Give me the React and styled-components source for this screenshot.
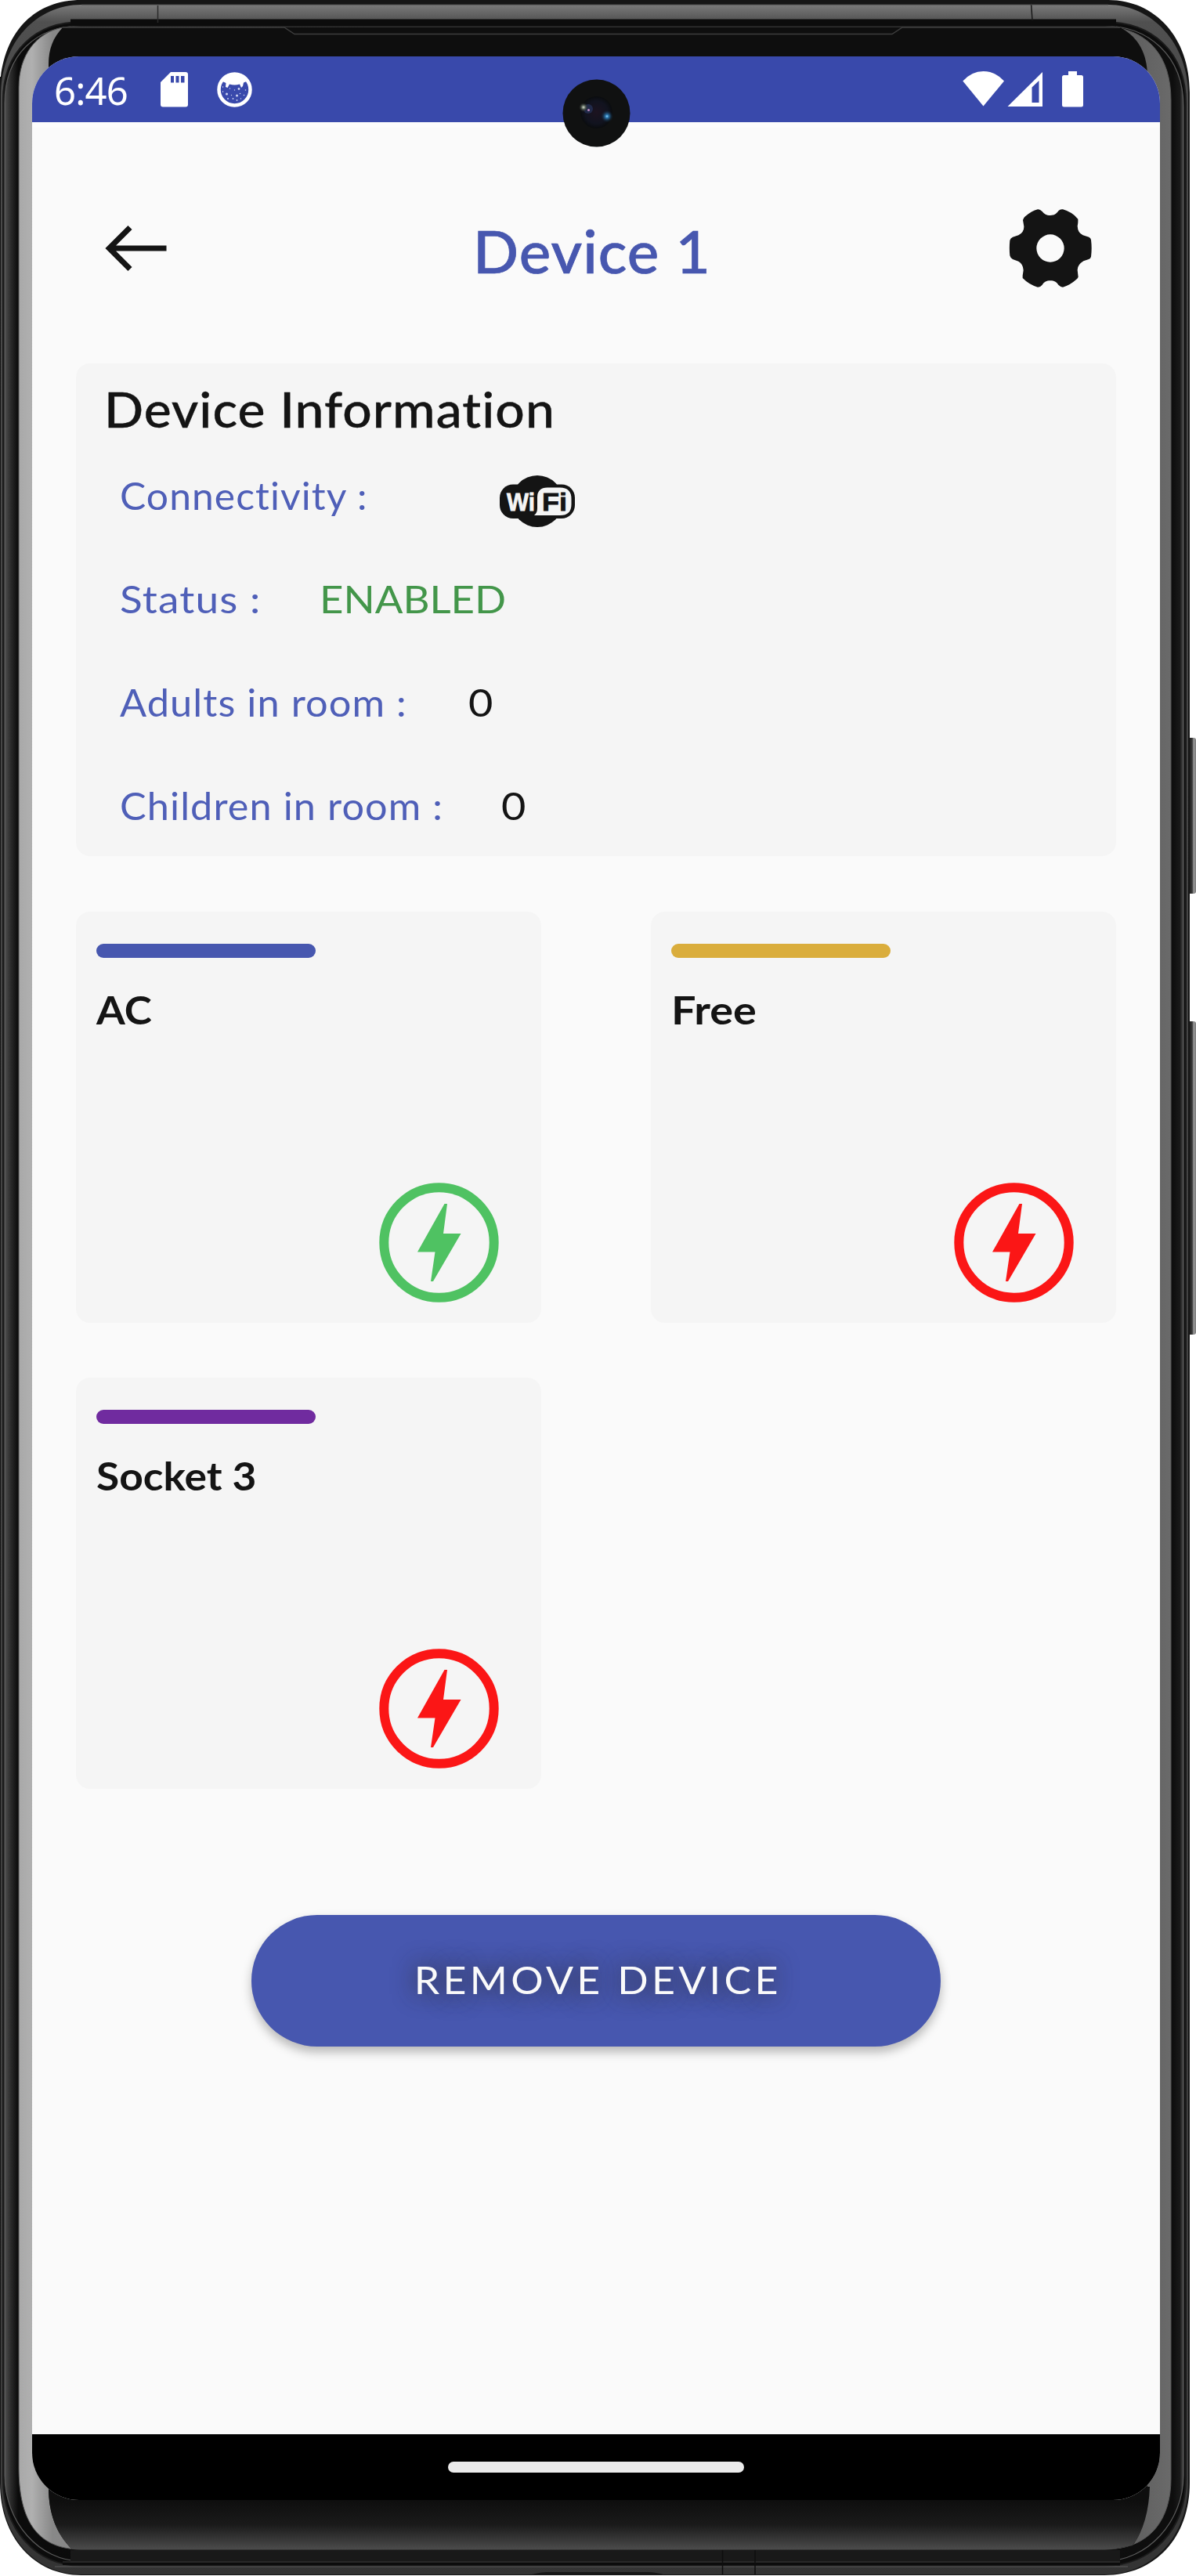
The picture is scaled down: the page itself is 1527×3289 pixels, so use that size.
import React from "react";
import styled, { createGlobalStyle } from "styled-components";

const GlobalStyle = createGlobalStyle`
  body { margin: 0; background: #fff; }
  * { box-sizing: border-box; }
`;

const Stage = styled.div`
  position: relative;
  width: 1527px;
  height: 3289px;
  padding: 72px 46px 97px 41px;
  font-family: Lato, "Open Sans", sans-serif;
  color: #141414;
  overflow: hidden;
`;

const FrameArt = styled.svg`
  position: absolute;
  inset: 0;
  width: 1527px;
  height: 3289px;
`;

const SideKey = styled.div`
  position: absolute;
  left: 1519px;
  top: ${(p) => p.$top}px;
  width: 8px;
  height: ${(p) => p.$height}px;
  border-radius: 0 3px 3px 0;
  background: linear-gradient(90deg, #222, #3a3a3a 40%, #999 62%, #7c7c7c);
`;

const Camera = styled.svg`
  position: absolute;
  left: 718px;
  top: 101px;
  width: 87px;
  height: 87px;
`;

const Screen = styled.div`
  position: relative;
  display: flex;
  flex-direction: column;
  width: 1440px;
  height: 3120px;
  border-radius: 60px;
  overflow: hidden;
  background: #fafafa;
`;

const StatusBar = styled.div`
  display: flex;
  justify-content: space-between;
  height: 84px;
  padding: 0 97px 0 28px;
  background: #3949ab;
  color: #fff;
`;

const Clock = styled.span`
  font: 400 49px/84px "Noto Sans", "Open Sans", sans-serif;
  width: 135px;
  height: 84px;
  padding-top: 1px;
  letter-spacing: -0.8px;
`;

const Side = styled.div`
  display: flex;
`;

const Content = styled.main`
  display: flex;
  flex-direction: column;
  align-items: center;
  flex: 1;
  padding: 0 56px;
  border-top: 7px solid #fcfcfc;
`;

const Header = styled.header`
  display: flex;
  justify-content: space-between;
  align-items: center;
  width: 100%;
  height: 301px;
  padding: 6px 31px 0 37px;
`;

const Title = styled.h1`
  margin: 0;
  padding: 7px 0 0 9px;
  font-size: 75px;
  line-height: 90px;
  font-weight: 500;
  letter-spacing: 1px;
  transform: scaleX(${(p) => p.$stretch});
  -webkit-text-stroke: 0.7px #4757af;
  color: #4757af;
`;

const InfoCard = styled.section`
  width: 1328px;
  height: 629px;
  padding: 21px 36px 0;
  border-radius: 18px;
  background: #f5f5f5;
`;

const InfoTitle = styled.h2`
  margin: 0 0 19px;
  font-size: 62px;
  line-height: 74px;
  font-weight: 500;
  letter-spacing: 1px;
  transform: scaleX(${(p) => p.$stretch});
  transform-origin: left;
  -webkit-text-stroke: 0.4px #141414;
`;

const InfoRow = styled.div`
  display: flex;
  align-items: center;
  height: 132px;
  padding: 0 0 24px 20px;
  font-size: 47.5px;
  line-height: 57px;
`;

const Label = styled.span`
  width: ${(p) => p.$width}px;
  white-space: nowrap;
  color: #4f5fb8;
`;

const Stretched = styled.span`
  display: inline-block;
  letter-spacing: 1px;
  transform: scaleX(${(p) => p.$stretch});
  transform-origin: left;
`;

const Value = styled.span`
  display: inline-block;
  color: ${(p) => p.$color || "#141414"};
  transform: scaleX(${(p) => p.$stretch});
  transform-origin: left;
`;

const WifiMark = styled.svg`
  width: 98px;
  height: 68px;
  margin-top: 15px;
`;

const SocketGrid = styled.section`
  display: grid;
  grid-template-columns: 594px 594px;
  gap: 70px 140px;
  margin-top: 71px;
`;

const SocketCard = styled.article`
  display: flex;
  flex-direction: column;
  height: 525px;
  padding: 41px 54px 26px 26px;
  border-radius: 18px;
  background: #f5f5f5;
`;

const Accent = styled.div`
  width: 280px;
  height: 18px;
  border-radius: 9px;
  background: ${(p) => p.$color};
`;

const SocketName = styled.h3`
  margin: 36px 0 auto;
  font-size: 50px;
  line-height: 60px;
  font-weight: 700;
  transform: scaleX(${(p) => p.$stretch});
  transform-origin: left;
`;

const BoltIcon = styled.svg`
  align-self: flex-end;
  width: 153px;
  height: 153px;
`;

const RemoveButton = styled.button`
  width: 880px;
  height: 168px;
  margin-top: 161px;
  padding: 0 0 2px 4px;
  border: 0;
  border-radius: 84px;
  background: #4757af;
  color: #fafafa;
  font: 400 48px/58px Lato, "Open Sans", sans-serif;
  text-shadow: 0 0 30px rgba(50, 50, 60, 0.85), 0 0 24px rgba(50, 50, 60, 0.4);
  box-shadow: 0 7px 13px rgba(0, 0, 0, 0.27);
`;

const ButtonText = styled.span`
  display: inline-block;
  letter-spacing: 4px;
  transform: scaleX(${(p) => p.$stretch});
`;

const NavBar = styled.nav`
  display: flex;
  justify-content: center;
  align-items: center;
  height: 84px;
  background: #000;
`;

const HomePill = styled.div`
  width: 378px;
  height: 14px;
  border-radius: 7px;
  background: #ebebeb;
`;

function Frame() {
  return (
    <FrameArt viewBox="0 0 1527 3289">
      <defs>
        <linearGradient id="metal" gradientUnits="userSpaceOnUse" x1="0" y1="5" x2="0" y2="3288">
          <stop offset="0" stopColor="#7c7c7c" />
          <stop offset="0.007" stopColor="#505050" />
          <stop offset="0.03" stopColor="#4a4a4a" />
          <stop offset="0.96" stopColor="#3c3c3c" />
          <stop offset="1" stopColor="#333" />
        </linearGradient>
        <linearGradient id="rim" gradientUnits="userSpaceOnUse" x1="5" y1="0" x2="1514" y2="0">
          <stop offset="0" stopColor="#858585" />
          <stop offset="0.0015" stopColor="#4a4a4a" />
          <stop offset="0.006" stopColor="#2a2a2a" />
          <stop offset="0.012" stopColor="#0b0b0b" />
          <stop offset="0.989" stopColor="#0e0e0e" />
          <stop offset="0.995" stopColor="#191919" />
          <stop offset="0.9985" stopColor="#555" />
          <stop offset="1" stopColor="#222" />
        </linearGradient>
        <linearGradient id="glass" gradientUnits="userSpaceOnUse" x1="23" y1="0" x2="1495" y2="0">
          <stop offset="0" stopColor="#a8a8a8" />
          <stop offset="0.012" stopColor="#b0b0b0" />
          <stop offset="0.03" stopColor="#888" />
          <stop offset="0.97" stopColor="#606060" />
          <stop offset="1" stopColor="#6a6a6a" />
        </linearGradient>
        <linearGradient id="chin" gradientUnits="userSpaceOnUse" x1="0" y1="3192" x2="0" y2="3255">
          <stop offset="0" stopColor="#0e0e0e" />
          <stop offset="0.5" stopColor="#1a1a1a" />
          <stop offset="1" stopColor="#4b4b4b" />
        </linearGradient>
      </defs>
      <path d="M104 0H1415C1475 0 1519 48 1519 118V3170C1519 3240 1475 3288 1410 3288H104C44 3288 0 3240 0 3170V98H1C8 40 44 0 104 0Z" fill="#161616" />
      <path d="M104 6H1415C1470 6 1517 55 1517 122V3170C1517 3240 1470 3287 1410 3287H104C46 3287 1 3240 1 3170V122C1 55 46 6 104 6Z" fill="url(#metal)" />
      <path d="M104 28H1410C1470 28 1514 65 1514 132V3165C1514 3230 1470 3276 1410 3276H104C46 3276 4 3230 4 3165V128C4 65 46 28 104 28Z" fill="#0c0c0c" stroke="#1b1b1b" strokeWidth="2" />
      <path d="M104 33H1410C1465 33 1511 70 1511 136V3160C1511 3220 1465 3270 1410 3270H104C50 3270 6 3220 6 3160V132C6 70 46 33 104 33Z" fill="url(#rim)" stroke="#5a5a5a" strokeWidth="1.2" />
      <path d="M90 29H1425M90 3260H1430" stroke="#0c0c0c" strokeWidth="9" />
      <path d="M90 3256H1430V3276H90Z" fill="#191919" />
      <path d="M80 3271H1430" stroke="#3a3a3a" strokeWidth="1.2" />
      <path d="M80 3273.500H1430" stroke="#0c0c0c" strokeWidth="3" />
      <path d="M70 3277H1440" stroke="#5c5c5c" strokeWidth="1.2" />
      <path d="M675 3288C690 3284 695 3284 705 3284H825C835 3284 840 3285 850 3288Z" fill="#161616" />
      <path d="M922.500 3256V3287M964 3256V3287" stroke="#0e0e0e" strokeWidth="1.500" />
      <path d="M90 35H1425C1465 42 1495 70 1495 128V3165C1495 3215 1470 3255 1410 3255H104C45 3255 24 3215 24 3150V112C24 70 46 42 80 35Z" fill="url(#glass)" stroke="#555" strokeWidth="1" />
      <path d="M80 35H1430C1455 48 1464 70 1465 95V3175C1465 3205 1460 3232 1446 3250L1420 3255H92C72 3235 62 3210 62 3175V82C62 62 68 48 80 35Z" fill="#0e0e0e" />
      <path d="M62 3175C62 3210 72 3235 92 3255H1420L1446 3250C1460 3232 1467 3205 1468 3175Z" fill="url(#chin)" />
      <path d="M80 35H363L376 43.500H1139L1152 35H1430" fill="none" stroke="#3e3e3e" strokeWidth="1.400" />
      <path d="M201.500 7V29" stroke="#2a2a2a" strokeWidth="1.500" />
      <path d="M1316.500 4L1318 26" stroke="#1c1c1c" strokeWidth="1.600" />
      <path d="M104 6H1415" stroke="#484848" strokeWidth="1" />
    </FrameArt>
  );
}

function StatusIconsLeft() {
  return (
    <svg width="124" height="84" viewBox="204 72 124 84">
      <path d="M218 92H237Q240 92 240 95V133.500Q240 136.500 237 136.500H208Q205 136.500 205 133.500V105Z" fill="#fff" />
      <path d="M218 97h4v8.500h-4zM224.500 97h4v8.500h-4zM231 97h4.500v8.500h-4.500z" fill="#3949ab" />
      <circle cx="299.500" cy="114.500" r="20" fill="none" stroke="#fff" strokeWidth="4.500" />
      <path d="M282 103C286 95 293 93 299.500 93S313 95 317 103L311 105.500L310 110L308 112L306 107.500Q299.500 109.500 293 107.500L290.500 112L288 111L288.500 106Z" fill="#fff" />
      <g fill="#cfd5f2">
        <circle cx="289.500" cy="120" r="1.500" /><circle cx="302.500" cy="122" r="1.500" />
        <circle cx="305" cy="113.500" r="1.400" /><circle cx="284.500" cy="111" r="0.800" />
        <circle cx="293.500" cy="113" r="0.700" /><circle cx="299.500" cy="115" r="0.700" />
        <circle cx="295.500" cy="121.500" r="0.700" /><circle cx="291" cy="126" r="0.900" />
        <circle cx="297.500" cy="126" r="0.900" /><circle cx="302.500" cy="128" r="0.900" />
        <circle cx="306.500" cy="119.500" r="0.800" /><circle cx="311.500" cy="121.500" r="0.800" />
        <circle cx="284.500" cy="117" r="0.800" /><circle cx="313.500" cy="115" r="0.800" />
        <circle cx="307.500" cy="126" r="0.700" />
      </g>
    </svg>
  );
}

function StatusIconsRight() {
  return (
    <svg width="156" height="84" viewBox="1228 72 156 84">
      <g fill="#fff">
        <path d="M1255.500 135.500L1229.300 103.500Q1240.500 91 1255.500 91T1282 103.500Z" />
        <path fillRule="evenodd" d="M1331 92V136H1286.500ZM1326.500 103L1317.500 111.500V131H1326.500Z" />
        <path d="M1364 91H1375V96H1380.500Q1383 96 1383 98.500V134Q1383 136.500 1380.500 136.500H1358.500Q1356 136.500 1356 134V98.500Q1356 96 1358.500 96H1364Z" />
      </g>
    </svg>
  );
}

function BackArrow() {
  return (
    <svg width="80" height="60" viewBox="134 287 80 60" fill="none" stroke="#141414" strokeWidth="7.200">
      <path d="M138.500 317H212.500M166 290.500L139.500 317L166 343.500" />
    </svg>
  );
}

function Gear() {
  return (
    <svg width="106" height="102" viewBox="-159 -153 318 306">
      <path
        fill="#141414"
        fillRule="evenodd"
        d="M0-126C16-126 22-131 31-143Q38-151 48-149Q84-139 106-112Q107-98 104-85Q105-60 125-50L148-43Q155-40 156-32Q160 0 156 32Q154 40 147 42L127 49Q103 64 104 84L107 110Q104 116 98 121Q75 142 48 149Q40 149 31 140C22 128 16 124 0 124S-22 128-31 140Q-38 149-48 149Q-82 139-106 114L-106 104L-103 84Q-104 60-122 50L-144 42Q-153 38-155 28Q-158 0-155-30Q-153-39-144-43L-122-50Q-100-62-101-84L-105-108Q-104-116-96-122Q-72-143-48-149Q-40-150-31-141C-22-131-16-126 0-126ZM0-53A53 53 0 1 0 0 53A53 53 0 1 0 0-53Z"
      />
    </svg>
  );
}

function WifiLogo() {
  return (
    <WifiMark viewBox="0 0 98 68">
      <circle cx="49" cy="34" r="33" fill="#141414" />
      <rect x="1" y="12.500" width="96" height="43.500" rx="17" fill="#141414" />
      <path d="M45 52Q49 49 49 43V29Q49 16.500 62 16.500H78Q92.500 16.500 92.500 31V38Q92.500 52 78 52Z" fill="#f5f5f5" />
      <text x="10" y="45.500" fontFamily="Liberation Sans, sans-serif" fontWeight="700" fontSize="31" textLength="36" lengthAdjust="spacingAndGlyphs" fill="#f5f5f5" stroke="#f5f5f5" strokeWidth="0.800">Wi</text>
      <text x="55" y="45.500" fontFamily="Liberation Sans, sans-serif" fontWeight="700" fontSize="31" textLength="32" lengthAdjust="spacingAndGlyphs" fill="#141414" stroke="#141414" strokeWidth="0.800">Fi</text>
    </WifiMark>
  );
}

function Bolt({ color }) {
  return (
    <BoltIcon viewBox="0 0 153 153">
      <circle cx="76.500" cy="76.500" r="70.200" fill="none" stroke={color} strokeWidth="12" />
      <path d="M87 27L82 65H104.500L69 126H66L71.500 88.500H49L83.500 27Z" fill={color} />
    </BoltIcon>
  );
}

const sockets = [
  { name: "AC", accent: "#4757af", bolt: "#4fc262", stretch: 1.06 },
  { name: "Free", accent: "#daad3c", bolt: "#fb1616", stretch: 1.115 },
  { name: "Socket 3", accent: "#702b9f", bolt: "#fb1616", stretch: 1.066 },
];

export default function App() {
  return (
    <Stage>
      <GlobalStyle />
      <Frame />
      <SideKey $top={942} $height={199} />
      <SideKey $top={1304} $height={400} />
      <Screen>
        <StatusBar>
          <Side>
            <Clock>6:46</Clock>
            <StatusIconsLeft />
          </Side>
          <StatusIconsRight />
        </StatusBar>
        <Content>
          <Header>
            <BackArrow />
            <Title $stretch={1.02}>Device 1</Title>
            <Gear />
          </Header>
          <InfoCard>
            <InfoTitle $stretch={1.064}>Device Information</InfoTitle>
            <InfoRow>
              <Label $width={484}><Stretched $stretch={1.049}>Connectivity :</Stretched></Label>
              <WifiLogo />
            </InfoRow>
            <InfoRow>
              <Label $width={255}><Stretched $stretch={1.12}>Status :</Stretched></Label>
              <Value $color="#43964a" $stretch={1.11}>ENABLED</Value>
            </InfoRow>
            <InfoRow>
              <Label $width={445}><Stretched $stretch={1.063}>Adults in room :</Stretched></Label>
              <Value $stretch={1.14}>0</Value>
            </InfoRow>
            <InfoRow>
              <Label $width={487}><Stretched $stretch={1.062}>Children in room :</Stretched></Label>
              <Value $stretch={1.14}>0</Value>
            </InfoRow>
          </InfoCard>
          <SocketGrid>
            {sockets.map((s) => (
              <SocketCard key={s.name}>
                <Accent $color={s.accent} />
                <SocketName $stretch={s.stretch}>{s.name}</SocketName>
                <Bolt color={s.bolt} />
              </SocketCard>
            ))}
          </SocketGrid>
          <RemoveButton>
            <ButtonText $stretch={1.08}>REMOVE DEVICE</ButtonText>
          </RemoveButton>
        </Content>
        <NavBar>
          <HomePill />
        </NavBar>
      </Screen>
      <Camera viewBox="0 0 87 87">
        <defs>
          <radialGradient id="lens">
            <stop offset="0" stopColor="#1c1320" />
            <stop offset="0.7" stopColor="#11131f" />
            <stop offset="1" stopColor="#0a0c0e" />
          </radialGradient>
          <radialGradient id="glow">
            <stop offset="0" stopColor="#8fd8ff" />
            <stop offset="0.25" stopColor="#2d78b0" />
            <stop offset="1" stopColor="#123" stopOpacity="0" />
          </radialGradient>
          <radialGradient id="flare">
            <stop offset="0" stopColor="#d8ddd0" />
            <stop offset="0.4" stopColor="#5a655a" />
            <stop offset="1" stopColor="#222" stopOpacity="0" />
          </radialGradient>
        </defs>
        <circle cx="43.500" cy="43.500" r="43" fill="#101111" />
        <circle cx="43.500" cy="42.500" r="20.500" fill="url(#lens)" />
        <circle cx="57" cy="47.500" r="8" fill="url(#glow)" />
        <circle cx="33" cy="38" r="6" fill="#2a3b68" opacity="0.6" />
        <circle cx="27" cy="36" r="6" fill="url(#flare)" />
        <circle cx="33.500" cy="39.500" r="1.500" fill="#c08ac0" />
      </Camera>
    </Stage>
  );
}
